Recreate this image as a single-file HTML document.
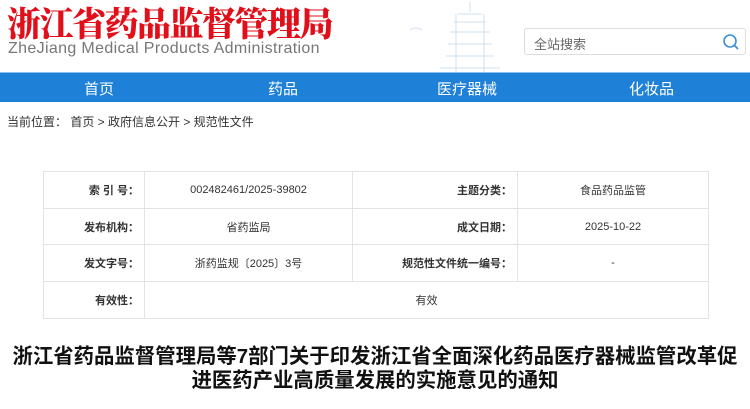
<!DOCTYPE html><html><head><meta charset="utf-8"><style>
*{margin:0;padding:0;box-sizing:border-box}
body{width:750px;height:409px;overflow:hidden;background:#fff;font-family:"Liberation Sans","Noto Sans CJK SC",sans-serif;position:relative}
.logo{position:absolute;left:7px;top:2px;font-family:"Noto Serif CJK SC",serif;font-weight:900;font-size:34px;color:#e10f1a;letter-spacing:-1.5px;line-height:40px}
.en{position:absolute;left:8px;top:40px;font-size:16px;color:#777;letter-spacing:0.35px}
.search{position:absolute;left:524px;top:28px;width:222px;height:27px;border:1px solid #ddd;border-radius:3px}
.search span{position:absolute;left:9px;top:5px;font-size:13px;color:#666}
.nav{position:absolute;left:0;top:72px;width:750px;height:30px;background:#1e80d6;border-top:1px solid #8cc3ee}
.nav div{position:absolute;top:5px;color:#fff;font-size:15px}
.crumb{position:absolute;left:7px;top:113px;font-size:12px;color:#333}
table{position:absolute;left:43px;top:171px;border-collapse:collapse;font-size:11px;color:#333}
td{border:1px solid #e3e3e3;height:36.7px;text-align:center}
td.l{text-align:right;font-weight:bold;padding-right:5px}
h1{position:absolute;left:0;top:345px;width:750px;text-align:center;font-size:20.4px;line-height:24px;font-weight:bold;color:#111;white-space:nowrap}
</style></head><body>
<svg style="position:absolute;left:410px;top:0" width="120" height="72" viewBox="0 0 120 72"><g fill="none" stroke="#cfe0ee" stroke-width="1"><path d="M60 2v10M48 14h24M44 22h32M40 32h40M38 44h44M36 56h48M46 14v58M74 14v58M30 68h60"/><path d="M0 30q6-4 12 0"/></g></svg>
<div class="logo">浙江省药品监督管理局</div>
<div class="en">ZheJiang Medical Products Administration</div>
<div class="search"><span>全站搜索</span><svg style="position:absolute;right:5px;top:4px" width="18" height="18" viewBox="0 0 18 18"><circle cx="8" cy="8" r="6" fill="none" stroke="#3a8fd8" stroke-width="1.6"/><path d="M12.5 12.5L16 16" stroke="#3a8fd8" stroke-width="1.8"/></svg></div>
<div class="nav"><div style="left:84px">首页</div><div style="left:268px">药品</div><div style="left:437px">医疗器械</div><div style="left:629px">化妆品</div></div>
<div class="crumb">当前位置： 首页 &gt; 政府信息公开 &gt; 规范性文件</div>
<table>
<tr><td class="l" style="width:101px">索 引 号：</td><td style="width:208px">002482461/2025-39802</td><td class="l" style="width:165px">主题分类：</td><td style="width:191px">食品药品监管</td></tr>
<tr><td class="l">发布机构：</td><td>省药监局</td><td class="l">成文日期：</td><td>2025-10-22</td></tr>
<tr><td class="l">发文字号：</td><td>浙药监规〔2025〕3号</td><td class="l">规范性文件统一编号：</td><td>-</td></tr>
<tr><td class="l">有效性：</td><td colspan="3">有效</td></tr>
</table>
<h1>浙江省药品监督管理局等7部门关于印发浙江省全面深化药品医疗器械监管改革促<br>进医药产业高质量发展的实施意见的通知</h1>
</body></html>
